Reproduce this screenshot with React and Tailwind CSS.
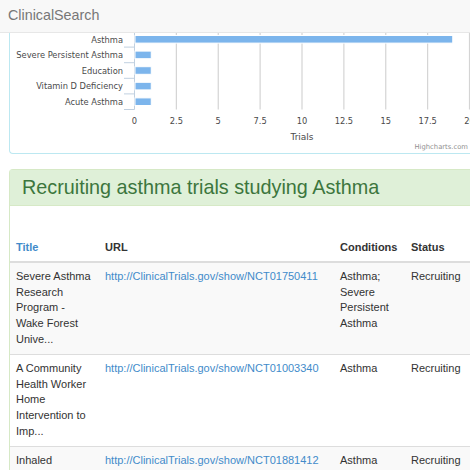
import React from "react";

const cats = [
  { name: "Asthma", v: 19 },
  { name: "Severe Persistent Asthma", v: 1 },
  { name: "Education", v: 1 },
  { name: "Vitamin D Deficiency", v: 1 },
  { name: "Acute Asthma", v: 1 },
];

function Chart() {
  const x0 = 134.5;
  const unit = 16.75;
  const top = 32.5;
  const band = 15.6;
  const bottom = top + band * 5;
  const ticks = [0, 2.5, 5, 7.5, 10, 12.5, 15, 17.5, 20];
  return (
    <svg width="460" height="120" viewBox="10 34 460 120" className="block">
      {ticks.slice(1).map((t) => (
        <line key={t} x1={x0 + t * unit} x2={x0 + t * unit} y1={20} y2={bottom} stroke="#d4d4d4" strokeWidth="1.2" />
      ))}
      <line x1={x0} x2={x0} y1={20} y2={bottom} stroke="#C0D0E0" strokeWidth="1" />
      {[0, 1, 2, 3, 4, 5].map((i) => (
        <line key={i} x1={124} x2={x0} y1={top + i * band} y2={top + i * band} stroke="#C0D0E0" strokeWidth="1" />
      ))}
      {cats.map((c, i) => {
        const cy = top + band * i + band / 2;
        return (
          <g key={c.name}>
            <rect x={x0 + 0.5} y={cy - 3.8} width={c.v * unit - 0.5} height={7.6} fill="#7cb5ec" stroke="#ffffff" strokeWidth="1" />
            <text x={123} y={cy + 3.2} textAnchor="end" fontFamily="'DejaVu Sans', sans-serif" fontSize="8.3" fill="#4a4a4a">
              {c.name}
            </text>
          </g>
        );
      })}
      {ticks.map((t) => (
        <text key={t} x={x0 + t * unit} y={125} textAnchor="middle" fontFamily="'DejaVu Sans', sans-serif" fontSize="8.3" fill="#4a4a4a">
          {t}
        </text>
      ))}
      <text x={302} y={140.5} textAnchor="middle" fontFamily="'DejaVu Sans', sans-serif" fontSize="9" fill="#4a4a4a">
        Trials
      </text>
      <text x={468} y={150} textAnchor="end" fontFamily="'DejaVu Sans', sans-serif" fontSize="6.8" fill="#909090">
        Highcharts.com
      </text>
    </svg>
  );
}

const rows = [
  {
    title: "Severe Asthma Research Program - Wake Forest Unive...",
    url: "http://ClinicalTrials.gov/show/NCT01750411",
    cond: "Asthma; Severe Persistent Asthma",
    status: "Recruiting",
  },
  {
    title: "A Community Health Worker Home Intervention to Imp...",
    url: "http://ClinicalTrials.gov/show/NCT01003340",
    cond: "Asthma",
    status: "Recruiting",
  },
  {
    title: "Inhaled Corticosteroid Treatment Study",
    url: "http://ClinicalTrials.gov/show/NCT01881412",
    cond: "Asthma",
    status: "Recruiting",
  },
];

export default function App() {
  return (
    <div className="w-[470px] h-[470px] overflow-hidden bg-white text-[#333333] font-['Liberation_Sans',Arial,sans-serif]">
      <div className="h-[33px] bg-[#f8f8f8] border-b border-[#e7e7e7] pl-[8px] pt-[3px]">
        <span className="text-[14.3px] leading-[17px] text-[#777777]">ClinicalSearch</span>
      </div>
      <div className="pl-[9px]">
        <div className="w-[480px] border-l border-b border-[#bce8f1] rounded-bl-[4px] bg-white">
          <Chart />
        </div>
        <div className="mt-[15px] w-[480px] border-l border-t border-[#d6e9c6] rounded-tl-[4px] bg-white">
          <div className="h-[36px] bg-[#dff0d8] border-b border-[#d6e9c6] pl-[12px] flex items-center">
            <h3 className="text-[19.8px] leading-[22px] text-[#3c763d] pb-[1px]">Recruiting asthma trials studying Asthma</h3>
          </div>
          <div className="pt-[29px]">
            <table className="table-fixed w-[480px] border-collapse text-[11px] leading-[15.8px]">
              <colgroup>
                <col className="w-[89px]" />
                <col className="w-[235px]" />
                <col className="w-[71px]" />
                <col />
              </colgroup>
              <thead>
                <tr>
                  <th className="text-left align-bottom px-[6px] py-[5px] border-b-2 border-[#dddddd] font-bold text-[#428bca]">Title</th>
                  <th className="text-left align-bottom px-[6px] py-[5px] border-b-2 border-[#dddddd] font-bold">URL</th>
                  <th className="text-left align-bottom px-[6px] py-[5px] border-b-2 border-[#dddddd] font-bold">Conditions</th>
                  <th className="text-left align-bottom px-[6px] py-[5px] border-b-2 border-[#dddddd] font-bold">Status</th>
                </tr>
              </thead>
              <tbody>
                {rows.map((r, i) => (
                  <tr key={r.url} className={i % 2 === 0 ? "bg-[#f9f9f9]" : "bg-white"}>
                    <td className="align-top px-[6px] pt-[6px] pb-[6px] border-t border-[#dddddd]">{r.title}</td>
                    <td className="align-top px-[6px] pt-[6px] pb-[6px] border-t border-[#dddddd]">
                      <a className="text-[#428bca]">{r.url}</a>
                    </td>
                    <td className="align-top px-[6px] pt-[6px] pb-[6px] border-t border-[#dddddd]">{r.cond}</td>
                    <td className="align-top px-[6px] pt-[6px] pb-[6px] border-t border-[#dddddd]">{r.status}</td>
                  </tr>
                ))}
              </tbody>
            </table>
          </div>
        </div>
      </div>
    </div>
  );
}
